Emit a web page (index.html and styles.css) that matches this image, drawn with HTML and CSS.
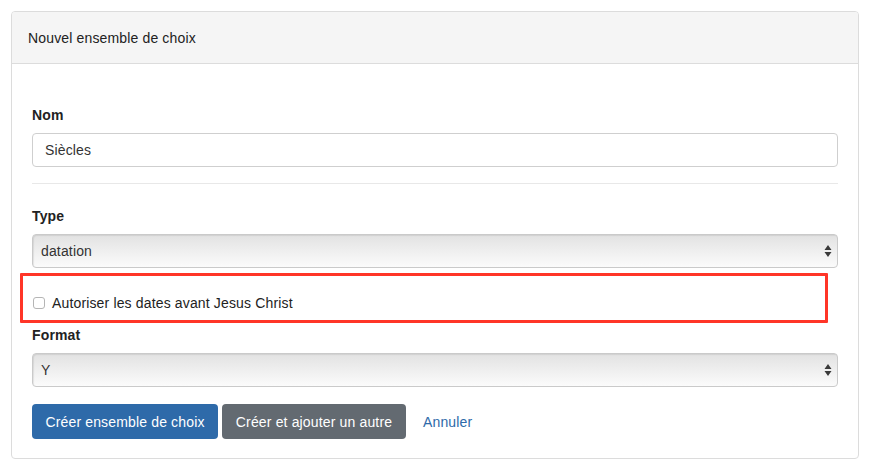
FILE: index.html
```html
<!DOCTYPE html>
<html lang="fr">
<head>
<meta charset="utf-8">
<title>Nouvel ensemble de choix</title>
<link rel="stylesheet" href="styles.css">
</head>
<body>
<div class="card">
  <div class="card-header">Nouvel ensemble de choix</div>
  <form class="card-body">
    <div class="group">
      <label class="lbl">Nom</label>
      <input class="input" type="text" value="Siècles">
    </div>
    <hr class="sep">
    <div class="group">
      <label class="lbl">Type</label>
      <div class="select">
        <span class="select-text">datation</span>
        <svg class="arrows" width="8" height="14" viewBox="0 0 8 14"><path d="M4 1 L7.5 6 H0.5 Z M4 13 L7.5 8 H0.5 Z" fill="#3a3a3a"/></svg>
      </div>
    </div>
    <div class="check-row">
      <span class="checkbox"></span>
      <span class="check-label">Autoriser les dates avant Jesus Christ</span>
      <span class="highlight"></span>
    </div>
    <div class="group">
      <label class="lbl">Format</label>
      <div class="select">
        <span class="select-text">Y</span>
        <svg class="arrows" width="8" height="14" viewBox="0 0 8 14"><path d="M4 1 L7.5 6 H0.5 Z M4 13 L7.5 8 H0.5 Z" fill="#3a3a3a"/></svg>
      </div>
    </div>
    <div class="actions">
      <button type="button" class="btn btn-primary">Créer ensemble de choix</button>
      <button type="button" class="btn btn-secondary">Créer et ajouter un autre</button>
      <a class="link" href="#">Annuler</a>
    </div>
  </form>
</div>
</body>
</html>
```

FILE: styles.css
```css
html, body {
  margin: 0;
  padding: 0;
  background: #ffffff;
}
body {
  font-family: "Liberation Sans", Arial, sans-serif;
  font-size: 14px;
  letter-spacing: 0.15px;
  color: #222;
}
.card {
  margin: 11px 11px 0 11px;
  width: 846px;
  border: 1px solid #dcdcdc;
  border-radius: 4px;
  overflow: hidden;
}
.card-header {
  height: 51px;
  line-height: 52px;
  padding: 0 16px;
  background: #f5f5f5;
  border-bottom: 1px solid #dcdcdc;
  color: #222;
}
.card-body {
  padding: 41px 20px 19px 20px;
  margin: 0;
  display: flex;
  flex-direction: column;
}
.group {
  display: flex;
  flex-direction: column;
}
.lbl {
  font-weight: bold;
  line-height: 20px;
  margin-bottom: 8px;
  color: #222;
}
.input {
  box-sizing: border-box;
  height: 34px;
  width: 100%;
  border: 1px solid #cfcfcf;
  border-radius: 4px;
  padding: 0 12px;
  font-family: inherit;
  font-size: 14px;
  letter-spacing: 0.15px;
  color: #333;
  outline: none;
}
.sep {
  border: 0;
  border-top: 1px solid #e8e8e8;
  margin: 16px 0 22px 0;
  height: 0;
}
.select {
  position: relative;
  box-sizing: border-box;
  height: 34px;
  border: 1px solid #cacaca;
  border-radius: 4px;
  background: linear-gradient(#e2e2e2, #f0f0f0 55%, #fbfbfb);
  box-shadow: inset 1px 1px 1px rgba(0,0,0,0.08);
  display: flex;
  align-items: center;
  padding: 0 8px;
  color: #333;
}
.arrows {
  position: absolute;
  right: 5px;
  top: 9px;
}
.check-row {
  position: relative;
  display: flex;
  align-items: center;
  height: 20px;
  margin: 25px 0 12px 0;
}
.checkbox {
  box-sizing: border-box;
  width: 12px;
  height: 12px;
  margin-left: 1px;
  border: 1px solid #b5b5b5;
  border-radius: 3px;
  background: #fff;
}
.check-label {
  margin-left: 7px;
  color: #222;
}
.highlight {
  position: absolute;
  left: -12px;
  top: -20px;
  width: 802px;
  height: 44px;
  border: 3px solid #ff3528;
  border-radius: 1px;
}
.actions {
  display: flex;
  align-items: center;
  margin-top: 17px;
}
.btn {
  height: 35px;
  padding: 0 12px;
  border: 0;
  border-radius: 4px;
  font-family: inherit;
  font-size: 14px;
  letter-spacing: 0.15px;
  color: #fff;
}
.btn-primary {
  background: #2e6aa9;
  width: 186px;
}
.btn-secondary {
  background: #636a71;
  margin-left: 4px;
  width: 184px;
}
.link {
  margin-left: 17px;
  color: #2e6aa9;
  text-decoration: none;
}
```
